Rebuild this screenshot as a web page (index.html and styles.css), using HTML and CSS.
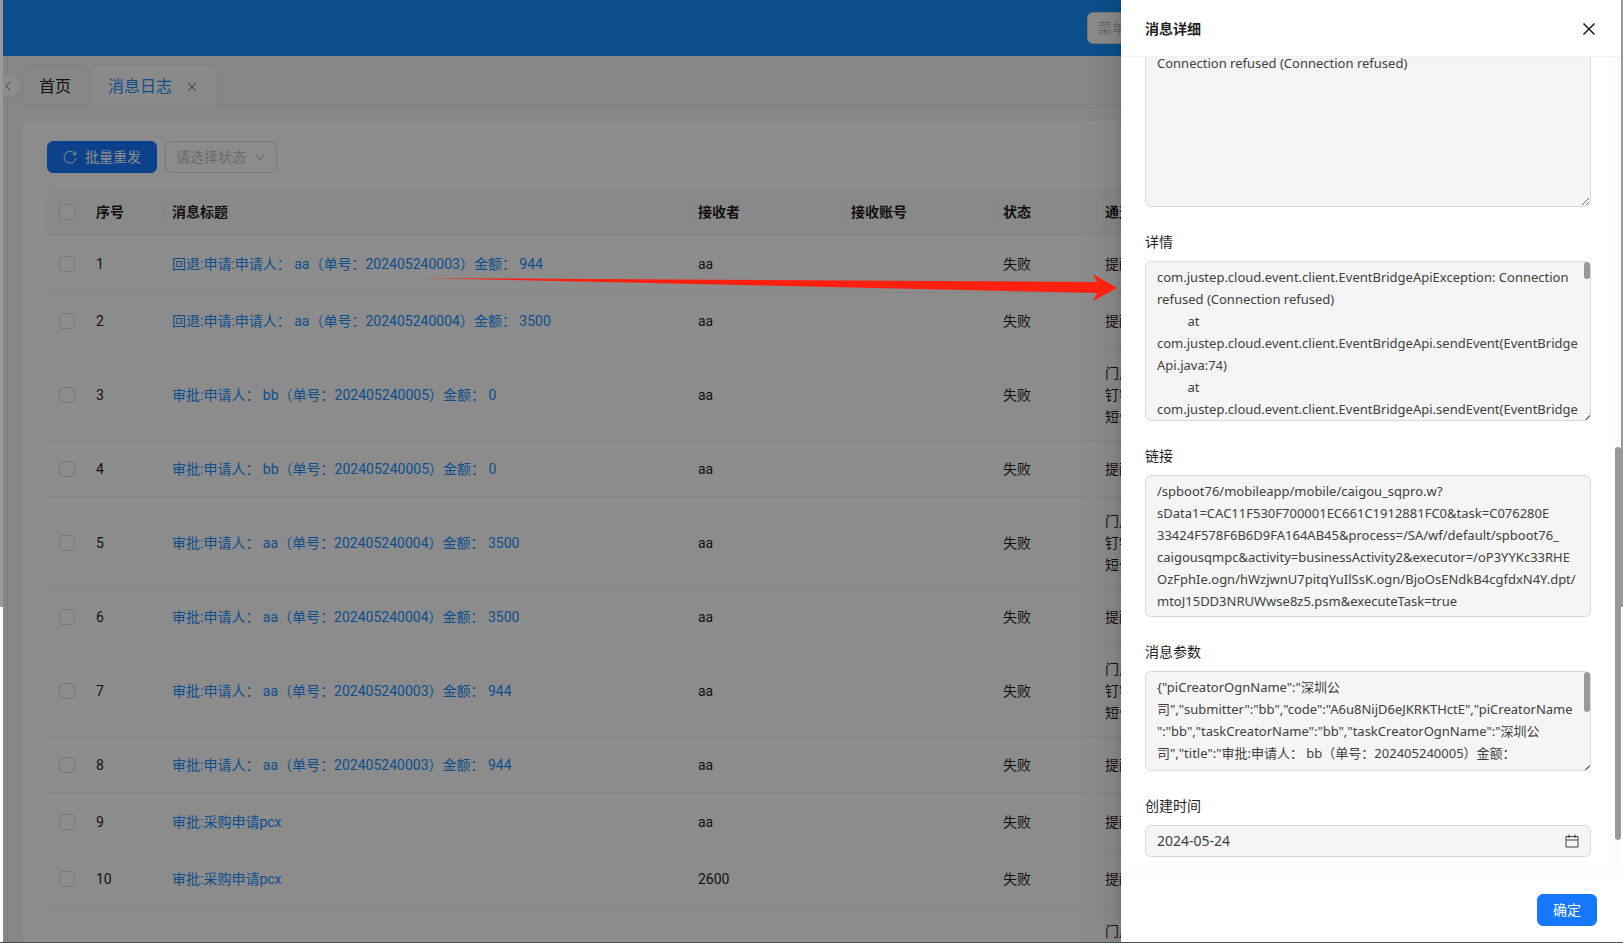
FILE: index.html
```
<!DOCTYPE html>
<html lang="zh-CN">
<head>
  <meta charset="UTF-8" />
  <meta name="viewport" content="width=device-width, initial-scale=1.0"/>
  <title>消息日志</title>
  <link rel="stylesheet" href="styles.css">
</head>
<body>

  <div class="edge edge-left"></div>

  <div class="screen">
    <header class="topbar">
      <input type="text" class="menu-search" placeholder="菜单搜索" aria-label="菜单搜索">
    </header>

    <div class="layout">
      <aside class="sider">
        <button class="collapse" aria-label="展开菜单">
          <svg width="10" height="10" viewBox="0 0 10 10"><path d="M7 1 3 5l4 4"/></svg>
        </button>
      </aside>

      <div class="content">
        <nav class="tabs">
          <a href="#" class="tab">首页</a>
          <a href="#" class="tab active">消息日志
            <svg width="10" height="10" viewBox="0 0 10 10"><path d="M1 1l8 8M9 1 1 9"/></svg>
          </a>
        </nav>

        <main class="panel">
          <div class="toolbar">
            <button class="btn primary">
              <svg width="14" height="14" viewBox="0 0 14 14"><path d="M12.3 4.2A6 6 0 1 0 13 8M12.8 1.6v3h-3"/></svg>
              批量重发
            </button>
            <button class="btn select">
              请选择状态
              <svg width="12" height="12" viewBox="0 0 12 12"><path d="M1.500 2.500 6 9l4.500-6.500"/></svg>
            </button>
          </div>

          <table>
            <colgroup>
              <col class="col-check"><col class="col-no"><col class="col-title"><col class="col-person"><col class="col-account"><col class="col-state"><col>
            </colgroup>
            <thead>
              <tr><th class="check"><input type="checkbox" aria-label="全选"></th><th>序号</th><th>消息标题</th><th>接收者</th><th>接收账号</th><th>状态</th><th>通道</th></tr>
            </thead>
            <tbody>
              <tr><td class="check"><input type="checkbox" aria-label="1"></td><td>1</td><td><a href="#">回退:申请:申请人： aa（单号：202405240003）金额： 944</a></td><td>aa</td><td></td><td>失败</td><td>提醒</td></tr>
              <tr><td class="check"><input type="checkbox" aria-label="2"></td><td>2</td><td><a href="#">回退:申请:申请人： aa（单号：202405240004）金额： 3500</a></td><td>aa</td><td></td><td>失败</td><td>提醒</td></tr>
              <tr><td class="check"><input type="checkbox" aria-label="3"></td><td>3</td><td><a href="#">审批:申请人： bb（单号：202405240005）金额： 0</a></td><td>aa</td><td></td><td>失败</td><td>门户<br>钉钉<br>短信</td></tr>
              <tr><td class="check"><input type="checkbox" aria-label="4"></td><td>4</td><td><a href="#">审批:申请人： bb（单号：202405240005）金额： 0</a></td><td>aa</td><td></td><td>失败</td><td>提醒</td></tr>
              <tr><td class="check"><input type="checkbox" aria-label="5"></td><td>5</td><td><a href="#">审批:申请人： aa（单号：202405240004）金额： 3500</a></td><td>aa</td><td></td><td>失败</td><td>门户<br>钉钉<br>短信</td></tr>
              <tr><td class="check"><input type="checkbox" aria-label="6"></td><td>6</td><td><a href="#">审批:申请人： aa（单号：202405240004）金额： 3500</a></td><td>aa</td><td></td><td>失败</td><td>提醒</td></tr>
              <tr><td class="check"><input type="checkbox" aria-label="7"></td><td>7</td><td><a href="#">审批:申请人： aa（单号：202405240003）金额： 944</a></td><td>aa</td><td></td><td>失败</td><td>门户<br>钉钉<br>短信</td></tr>
              <tr><td class="check"><input type="checkbox" aria-label="8"></td><td>8</td><td><a href="#">审批:申请人： aa（单号：202405240003）金额： 944</a></td><td>aa</td><td></td><td>失败</td><td>提醒</td></tr>
              <tr><td class="check"><input type="checkbox" aria-label="9"></td><td>9</td><td><a href="#">审批:采购申请pcx</a></td><td>aa</td><td></td><td>失败</td><td>提醒</td></tr>
              <tr><td class="check"><input type="checkbox" aria-label="10"></td><td>10</td><td><a href="#">审批:采购申请pcx</a></td><td>2600</td><td></td><td>失败</td><td>提醒</td></tr>
              <tr><td></td><td></td><td></td><td></td><td></td><td></td><td>门户<br><br><br></td></tr>
            </tbody>
          </table>
        </main>
      </div>
    </div>

    <div class="mask"></div>

    <!-- Detail drawer -->
    <section class="drawer">
      <div class="drawer-header">
        <h2>消息详细</h2>
        <button class="close" aria-label="关闭">
          <svg width="14" height="14" viewBox="0 0 14 14"><path d="M1.500 1.500l11 11M12.500 1.500l-11 11"/></svg>
        </button>
      </div>

      <div class="drawer-body">
        <form class="fields">
          <div class="area">
            <textarea class="tall" aria-label="错误信息" readonly>Connection refused (Connection refused)</textarea>
          </div>

          <label for="detail">详情</label>
          <div class="area scrolls">
            <textarea id="detail" class="tall" readonly>com.justep.cloud.event.client.EventBridgeApiException: Connection
refused (Connection refused)
	at
com.justep.cloud.event.client.EventBridgeApi.sendEvent(EventBridge
Api.java:74)
	at
com.justep.cloud.event.client.EventBridgeApi.sendEvent(EventBridge</textarea>
            <span class="thumb thumb-short"></span>
          </div>

          <label for="link">链接</label>
          <div class="area">
            <textarea id="link" class="link" readonly>/spboot76/mobileapp/mobile/caigou_sqpro.w?
sData1=CAC11F530F700001EC661C1912881FC0&amp;task=C076280E
33424F578F6B6D9FA164AB45&amp;process=/SA/wf/default/spboot76_
caigousqmpc&amp;activity=businessActivity2&amp;executor=/oP3YYKc33RHE
OzFphIe.ogn/hWzjwnU7pitqYuIlSsK.ogn/BjoOsENdkB4cgfdxN4Y.dpt/
mtoJ15DD3NRUWwse8z5.psm&amp;executeTask=true</textarea>
          </div>

          <label for="params">消息参数</label>
          <div class="area scrolls">
            <textarea id="params" class="params" readonly>{"piCreatorOgnName":"深圳公
司","submitter":"bb","code":"A6u8NijD6eJKRKTHctE","piCreatorName
":"bb","taskCreatorName":"bb","taskCreatorOgnName":"深圳公
司","title":"审批:申请人： bb（单号：202405240005）金额：</textarea>
            <span class="thumb"></span>
          </div>

          <label for="created">创建时间</label>
          <div class="date">
            <input type="text" id="created" value="2024-05-24" readonly>
            <svg width="14" height="14" viewBox="0 0 14 14"><path d="M1 2.500h12v10.500H1zM1 6h12M4 .500v3.500M10 .500v3.500"/></svg>
          </div>
        </form>
        <div class="scroll-track"><div class="scroll-thumb"></div></div>
      </div>

      <div class="drawer-footer">
        <button class="btn primary ok">确定</button>
      </div>
    </section>

    <!-- Pointer from the clicked row to the drawer -->
    <svg class="arrow" width="696" height="28" viewBox="0 0 696 28"><path d="M0 4 676 8 672 0 696 14 672 27 676 19z"/></svg>
  </div>

  <div class="edge edge-right"></div>

</body>
</html>
```
FILE: styles.css
```
* {
  box-sizing: border-box;
}

body {
  margin: 0;
  height: 100vh;
  display: flex;
  overflow: hidden;
  border-bottom: 1px solid #435263;
  font: 14px/22px Roboto, "Noto Sans CJK SC", sans-serif;
  color: #1f1f1f;
  background: #fff;
}

button, input, textarea {
  font: inherit;
  color: inherit;
}

svg {
  fill: none;
  stroke: currentColor;
}

/* window edges */
.edge {
  flex: none;
  height: 607px;
  background: #9a9a9a;
}

.edge-left {
  width: 3px;
}

.edge-right {
  width: 2px;
}

.screen {
  flex: 1;
  position: relative;
  overflow: hidden;
  display: flex;
  flex-direction: column;
}

.topbar {
  flex: none;
  height: 56px;
  padding: 12px 24px;
  background: #1890ff;
  display: flex;
  justify-content: flex-end;
}

.menu-search {
  width: 510px;
  height: 32px;
  padding: 4px 10px;
  border: 1px solid #d9d9d9;
  border-radius: 6px;
  background: #fff;
}

.menu-search::placeholder {
  color: #bfbfbf;
}

.layout {
  flex: 1;
  display: flex;
  min-height: 0;
}

.sider {
  position: relative;
  flex: none;
  width: 5px;
  border-right: 1px solid #e4e4e4;
  background: #f5f5f5;
}

.collapse {
  position: absolute;
  top: 18px;
  left: -7px;
  width: 24px;
  height: 24px;
  padding: 0;
  border: none;
  border-radius: 50%;
  background: #fff;
  box-shadow: 0 1px 3px rgba(0,0,0,0.1);
  color: #777;
  line-height: 10px;
}

.content {
  flex: 1;
  min-width: 0;
  padding-left: 15px;
  background: #f6f6f6;
}

/* Tabs */
.tabs {
  display: flex;
  align-items: flex-end;
  gap: 2px;
  height: 49px;
  margin: 0 0 16px;
  border-bottom: 1px solid #ebebeb;
}

.tab {
  height: 41px;
  margin-bottom: -1px;
  padding: 4px 17px 0 15px;
  border: 1px solid #ebebeb;
  border-radius: 8px 8px 0 0;
  display: flex;
  align-items: center;
  gap: 15px;
  font-size: 16px;
  color: #1f1f1f;
  text-decoration: none;
}

.tab.active {
  padding-left: 16px;
  padding-right: 19px;
  border-bottom-color: #fcfcfc;
  background: #fcfcfc;
  color: #1890ff;
}

.tab svg {
  color: #666;
}

.panel {
  padding: 20px 24px;
  background: #fff;
}

.toolbar {
  display: flex;
  gap: 8px;
  margin-bottom: 16px;
}

.btn {
  height: 32px;
  padding: 0 15px;
  border: 1px solid #d9d9d9;
  border-radius: 6px;
  background: #fff;
  display: flex;
  align-items: center;
  gap: 8px;
}

.primary {
  border-color: #1677ff;
  background: #1677ff;
  color: #fff;
}

.select {
  padding: 0 10px;
  color: #bfbfbf;
}

/* Message table */
table {
  width: 100%;
  table-layout: fixed;
  border-collapse: separate;
  border-spacing: 0;
}

.col-check {
  width: 41px;
}

.col-no {
  width: 76px;
}

.col-title {
  width: 526px;
}

.col-person {
  width: 153px;
}

.col-account {
  width: 152px;
}

.col-state {
  width: 102px;
}

th, td {
  padding: 12px 8px;
  border-bottom: 1px solid #f0f0f0;
  text-align: left;
}

th {
  position: relative;
  background: #fafafa;
  font-weight: bold;
}

/* column divider */
th:not(:first-child):not(:last-child)::after {
  content: "";
  position: absolute;
  top: 12px;
  right: 0;
  width: 1px;
  height: 22px;
  background: #f0f0f0;
}

th:first-child {
  border-radius: 8px 0 0 0;
}

td {
  height: 57px;
}

td a {
  color: #1890ff;
  text-decoration: none;
}

.check {
  padding: 0 12px;
}

input[type="checkbox"] {
  appearance: none;
  display: block;
  width: 16px;
  height: 16px;
  margin: 0;
  border: 1px solid #d9d9d9;
  border-radius: 4px;
  background: #fff;
}

.mask {
  position: absolute;
  inset: 0;
  background: rgba(0,0,0,0.45);
}

/* Drawer */
.drawer {
  position: absolute;
  top: 0;
  right: 0;
  bottom: 0;
  width: 500px;
  display: flex;
  flex-direction: column;
  background: #fff;
  box-shadow: -6px 0 16px rgba(0,0,0,0.08), -3px 0 6px -4px rgba(0,0,0,0.12), -9px 0 28px 8px rgba(0,0,0,0.05);
}

.drawer-header {
  flex: none;
  height: 57px;
  padding: 1px 25px 0 24px;
  border-bottom: 1px solid #f0f0f0;
  display: flex;
  align-items: center;
  justify-content: space-between;
}

.drawer-header h2 {
  margin: 0;
  font-size: 14px;
}

.close {
  padding: 0;
  border: none;
  background: none;
  line-height: 14px;
}

.close svg {
  display: block;
  stroke-width: 1.5;
}

.drawer-body {
  flex: 1;
  min-height: 0;
  margin-bottom: 16px;
  display: flex;
  overflow: hidden;
}

.fields {
  flex: 1;
  padding: 0 24px;
  margin-top: -10px;
}

.fields label {
  display: block;
  padding-bottom: 8px;
}

.area {
  position: relative;
  margin-bottom: 24px;
}

.area textarea {
  display: block;
  width: 100%;
  padding: 4px 11px;
  border: 1px solid #d9d9d9;
  border-radius: 6px;
  background: #f5f5f5;
  color: #404040;
  font-family: "Noto Sans", "Noto Sans CJK SC", sans-serif;
  font-size: 13px;
  white-space: pre;
  tab-size: 9;
  overflow: hidden;
  resize: vertical;
}

.area .tall {
  height: 160px;
}

.area .link {
  height: 142px;
  resize: none;
}

.area .params {
  height: 100px;
}

.scrolls textarea {
  resize: none;
}

/* resize corner under the thin scrollbar */
.scrolls::after {
  content: "";
  position: absolute;
  right: 1px;
  bottom: 1px;
  width: 6px;
  height: 6px;
  border-radius: 0 0 5px 0;
  background: linear-gradient(135deg, #fff 55%, #777 55%, #777 70%, #fff 70%);
}

/* thin scrollbar inside a text area */
.thumb {
  position: absolute;
  top: 1px;
  right: 1px;
  width: 6px;
  height: 40px;
  border-radius: 3px;
  background: #999;
}

.thumb-short {
  height: 17px;
}

.date {
  height: 32px;
  padding: 0 11px;
  border: 1px solid #d9d9d9;
  border-radius: 6px;
  background: #f5f5f5;
  display: flex;
  align-items: center;
  color: #404040;
}

.date input {
  flex: 1;
  padding: 0;
  border: none;
  background: none;
  outline: none;
  font-family: "Noto Sans", sans-serif;
}

.scroll-track {
  width: 6px;
  padding-top: 390px;
  background: #fafafa;
}

.scroll-thumb {
  height: 393px;
  border-radius: 3px;
  background: #999;
}

.drawer-footer {
  flex: none;
  padding: 16px 24px;
  display: flex;
  justify-content: flex-end;
  box-shadow: 0 -4px 12px rgba(0,0,0,0.03);
}

.arrow {
  position: absolute;
  top: 274px;
  left: 418px;
  fill: #ff2010;
  stroke: none;
}
```
